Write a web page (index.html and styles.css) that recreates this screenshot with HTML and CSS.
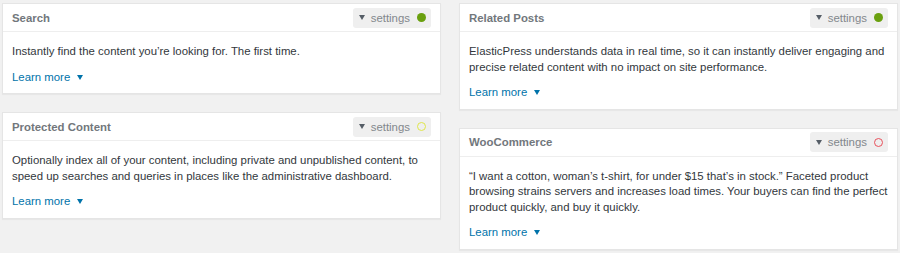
FILE: index.html
```html
<!DOCTYPE html>
<html lang="en">

<head>
    <meta charset="UTF-8">
    <title>ElasticPress Features</title>
    <link rel="stylesheet" href="styles.css">
</head>

<body>

    <section class="features">

        <div class="col">
            <article class="feature">
                <header class="feature_head">
                    <h2>Search</h2>
                    <button class="settings"><span class="pil"></span>settings<span class="dot dot_on"></span></button>
                </header>
                <div class="feature_body">
                    <p>Instantly find the content you’re looking for. The first time.</p>
                    <a href="#" class="learn">Learn more <span class="pil"></span></a>
                </div>
            </article>

            <article class="feature">
                <header class="feature_head">
                    <h2>Protected Content</h2>
                    <button class="settings"><span class="pil"></span>settings<span class="dot dot_gul"></span></button>
                </header>
                <div class="feature_body">
                    <p>Optionally index all of your content, including private and unpublished content, to speed up searches and queries in places like the administrative dashboard.</p>
                    <a href="#" class="learn">Learn more <span class="pil"></span></a>
                </div>
            </article>
        </div>

        <div class="col">
            <article class="feature">
                <header class="feature_head">
                    <h2>Related Posts</h2>
                    <button class="settings"><span class="pil"></span>settings<span class="dot dot_on"></span></button>
                </header>
                <div class="feature_body">
                    <p>ElasticPress understands data in real time, so it can instantly deliver engaging and precise related content with no impact on site performance.</p>
                    <a href="#" class="learn">Learn more <span class="pil"></span></a>
                </div>
            </article>

            <article class="feature">
                <header class="feature_head">
                    <h2>WooCommerce</h2>
                    <button class="settings"><span class="pil"></span>settings<span class="dot dot_off"></span></button>
                </header>
                <div class="feature_body">
                    <p>“I want a cotton, woman’s t-shirt, for under $15 that’s in stock.” Faceted product browsing strains servers and increases load times. Your buyers can find the perfect product quickly, and buy it quickly.</p>
                    <a href="#" class="learn">Learn more <span class="pil"></span></a>
                </div>
            </article>
        </div>

    </section>

</body>

</html>
```

FILE: styles.css
```css
body {
    margin: 0;
    background-color: #f1f1f1;
    font-family: "Liberation Sans", Arial, sans-serif;
}

.features {
    display: grid;
    grid-template-columns: 1fr 1fr;
    column-gap: 18px;
    padding: 3px 2px;
}

.col {
    display: flex;
    flex-direction: column;
    gap: 18px;
}


/* KORT */

.feature {
    background-color: white;
    border: 1px solid #e5e5e5;
    box-shadow: 0 1px 1px rgba(0, 0, 0, 0.04);
}

.feature_head {
    display: flex;
    align-items: center;
    justify-content: space-between;
    height: 27px;
    padding: 0 9px 0 9px;
    border-bottom: 1px solid #eeeeee;
}

.feature_head h2 {
    margin: 0;
    font-size: 11.4px;
    font-weight: bold;
    color: #72777c;
}

.settings {
    display: flex;
    align-items: center;
    height: 20px;
    padding: 0 5px 0 6px;
    border: none;
    border-radius: 3px;
    background-color: #efefef;
    font-family: "Liberation Sans", Arial, sans-serif;
    font-size: 11.4px;
    color: #82878c;
}

.pil {
    display: inline-block;
    width: 0;
    height: 0;
    border-left: 3px solid transparent;
    border-right: 3px solid transparent;
    border-top: 5px solid #555d66;
}

.settings .pil {
    margin-right: 6px;
}

.dot {
    display: inline-block;
    box-sizing: border-box;
    width: 9px;
    height: 9px;
    margin-left: 7px;
    border-radius: 50%;
}

.dot_on {
    background-color: #6aa00f;
}

.dot_gul {
    border: 1.5px solid #dfe64a;
}

.dot_off {
    border: 1.5px solid #e8505b;
}

.feature_body {
    padding: 12px 9px 8px 9px;
}

.feature_body p {
    margin: 0 0 10px 0;
    font-size: 11.4px;
    line-height: 15.5px;
    color: #32373c;
}

.learn {
    display: flex;
    align-items: center;
    line-height: 15.5px;
    font-size: 11.4px;
    color: #0073aa;
    text-decoration: none;
}

.learn .pil {
    margin-left: 7px;
    border-top-color: #0073aa;
}
```
